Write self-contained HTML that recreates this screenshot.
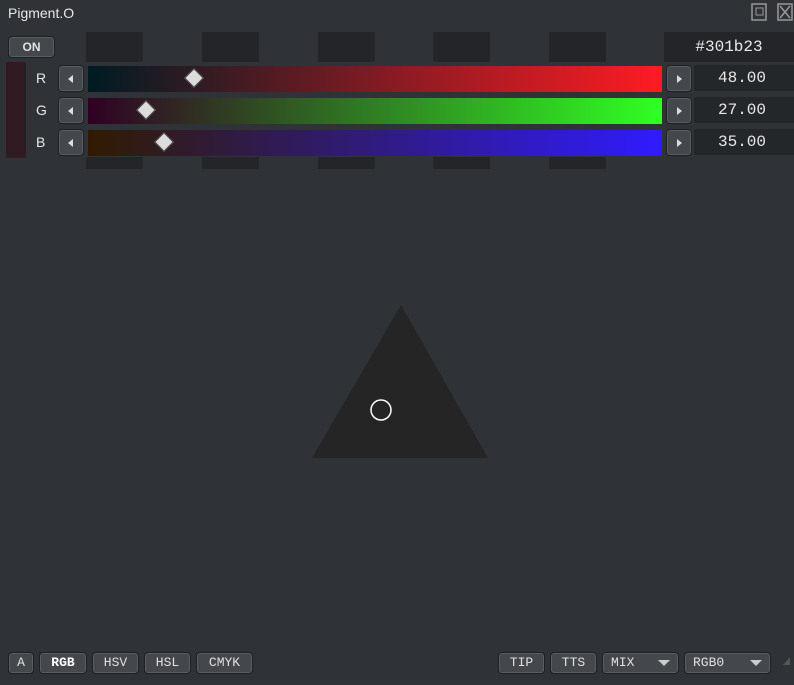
<!DOCTYPE html><html><head><style>
body{margin:0;width:794px;height:685px;background:#2f3236;position:relative;overflow:hidden;font-family:"Liberation Sans",sans-serif;color:#e8e8e8}
.a{position:absolute}
.blk{position:absolute;background:#232528}
.btn{position:absolute;background:#44474c;border:1px solid #1e2023;border-radius:4px;box-shadow:inset 0 0 0 1px #5a5d62;font-family:"Liberation Mono",monospace;font-size:13px;color:#e0e0e0;text-align:center;box-sizing:border-box;line-height:20px}
.val{position:absolute;left:694px;width:100px;height:26px;background:#24272a;font-family:"Liberation Mono",monospace;font-size:16px;line-height:26px;text-align:right;padding-right:28px;box-sizing:border-box}
.lbl{position:absolute;left:36px;font-size:14px;width:12px}
.ar{position:absolute;width:0;height:0;border-top:4px solid transparent;border-bottom:4px solid transparent}
.d{position:absolute;width:12px;height:12px;background:#dcdcdc;transform:rotate(45deg);border:1px solid #444}
</style></head><body>
<div class="a" style="left:8px;top:5px;font-size:14px">Pigment.O</div>
<svg class="a" style="left:750px;top:2px" width="44" height="20"><rect x="2" y="2" width="14" height="16" fill="none" stroke="#999" stroke-width="1.5"/><rect x="6" y="6" width="7" height="7" fill="none" stroke="#999"/><rect x="28" y="2" width="14" height="16" fill="none" stroke="#999" stroke-width="1.5"/><path d="M30 4L40 16M40 4L30 16" stroke="#999" stroke-width="1.5"/></svg>
<div class="btn" style="left:8px;top:36px;width:47px;height:22px;font-family:'Liberation Sans';font-weight:bold;font-size:12px">ON</div>
<div class="blk" style="left:86px;top:32px;width:57px;height:30px"></div>
<div class="blk" style="left:202px;top:32px;width:57px;height:30px"></div>
<div class="blk" style="left:318px;top:32px;width:57px;height:30px"></div>
<div class="blk" style="left:433px;top:32px;width:57px;height:30px"></div>
<div class="blk" style="left:549px;top:32px;width:57px;height:30px"></div>
<div class="blk" style="left:86px;top:157px;width:57px;height:12px"></div>
<div class="blk" style="left:202px;top:157px;width:57px;height:12px"></div>
<div class="blk" style="left:318px;top:157px;width:57px;height:12px"></div>
<div class="blk" style="left:433px;top:157px;width:57px;height:12px"></div>
<div class="blk" style="left:549px;top:157px;width:57px;height:12px"></div>
<div class="blk" style="left:664px;top:32px;width:130px;height:30px;font-family:'Liberation Mono',monospace;font-size:16px;line-height:30px;text-align:center;color:#e8e8e8">#301b23</div>
<div class="a" style="left:6px;top:62px;width:20px;height:96px;background:#301b23"></div>
<div class="lbl" style="top:70px">R</div><div class="lbl" style="top:102px">G</div><div class="lbl" style="top:134px">B</div>
<div class="btn" style="left:58px;top:65px;width:26px;height:27px"></div><div class="ar" style="left:68px;top:75px;border-right:5px solid #ddd"></div>
<div class="btn" style="left:58px;top:97px;width:26px;height:27px"></div><div class="ar" style="left:68px;top:107px;border-right:5px solid #ddd"></div>
<div class="btn" style="left:58px;top:129px;width:26px;height:27px"></div><div class="ar" style="left:68px;top:139px;border-right:5px solid #ddd"></div>
<div class="btn" style="left:666px;top:65px;width:26px;height:27px"></div><div class="ar" style="left:677px;top:75px;border-left:5px solid #ddd"></div>
<div class="btn" style="left:666px;top:97px;width:26px;height:27px"></div><div class="ar" style="left:677px;top:107px;border-left:5px solid #ddd"></div>
<div class="btn" style="left:666px;top:129px;width:26px;height:27px"></div><div class="ar" style="left:677px;top:139px;border-left:5px solid #ddd"></div>
<div class="a" style="left:88px;top:66px;width:574px;height:26px;background:linear-gradient(90deg,#001b23,#ff1b23)"></div>
<div class="a" style="left:88px;top:98px;width:574px;height:26px;background:linear-gradient(90deg,#300023,#30ff23)"></div>
<div class="a" style="left:88px;top:130px;width:574px;height:26px;background:linear-gradient(90deg,#301b00,#301bff)"></div>
<div class="d" style="left:187px;top:71px"></div>
<div class="d" style="left:139px;top:103px"></div>
<div class="d" style="left:157px;top:135px"></div>
<div class="val" style="top:65px">48.00</div>
<div class="val" style="top:97px">27.00</div>
<div class="val" style="top:129px">35.00</div>
<svg class="a" style="left:0;top:0" width="794" height="685"><polygon points="401,305 312,458 488,458" fill="#252525"/><circle cx="381" cy="410" r="10" fill="none" stroke="#fff" stroke-width="1.5"/><polygon points="790,657 790,665 783,665" fill="#555"/></svg>
<div class="btn" style="left:8px;top:652px;width:26px;height:22px">A</div>
<div class="btn" style="left:39px;top:652px;width:48px;height:22px;font-weight:bold;color:#fff">RGB</div>
<div class="btn" style="left:92px;top:652px;width:47px;height:22px">HSV</div>
<div class="btn" style="left:144px;top:652px;width:47px;height:22px">HSL</div>
<div class="btn" style="left:196px;top:652px;width:57px;height:22px">CMYK</div>
<div class="btn" style="left:498px;top:652px;width:47px;height:22px">TIP</div>
<div class="btn" style="left:550px;top:652px;width:47px;height:22px">TTS</div>
<div class="btn" style="left:602px;top:652px;width:77px;height:22px;text-align:left;padding-left:8px">MIX</div><div class="a" style="left:658px;top:660px;border-left:6px solid transparent;border-right:6px solid transparent;border-top:6px solid #ccc"></div>
<div class="btn" style="left:684px;top:652px;width:87px;height:22px;text-align:left;padding-left:8px">RGB0</div><div class="a" style="left:750px;top:660px;border-left:6px solid transparent;border-right:6px solid transparent;border-top:6px solid #ccc"></div>
</body></html>
